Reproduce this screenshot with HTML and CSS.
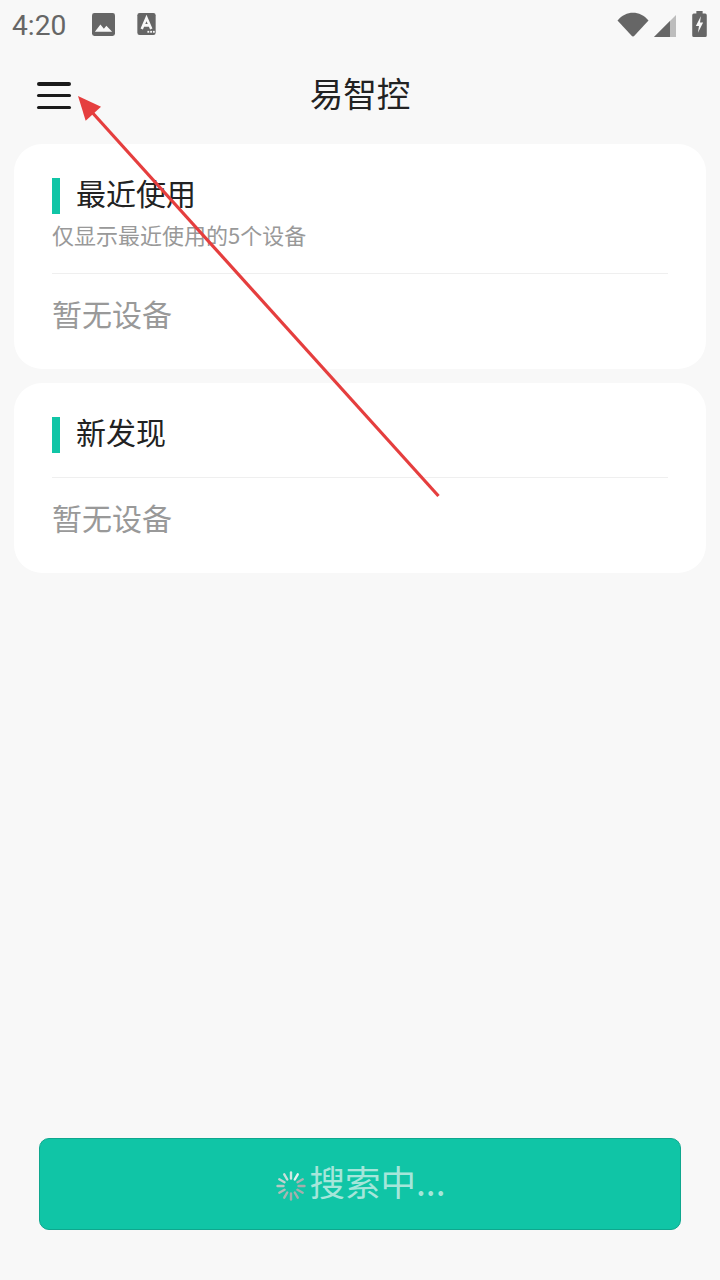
FILE: index.html
```html
<!DOCTYPE html>
<html lang="zh-CN">
<head>
<meta charset="utf-8">
<title>易智控</title>
<link rel="stylesheet" href="styles.css">
</head>
<body>
<div class="screen">
  <div class="status-bar">
    <span class="clock">4:20</span>
    <svg class="st-icon pic" viewBox="0 0 24 24"><rect x="0" y="0" width="24" height="24" rx="2.5" fill="#666"/><path d="M3 19.5 8.8 12l3.6 4.4 2.6-3.2 6 6.3z" fill="#f8f8f8"/></svg>
    <svg class="st-icon font" viewBox="0 0 20 24"><rect width="20" height="24" rx="2.5" fill="#666"/><path d="M4.800 17.500 10 5.500 15.200 17.500M7 13.500h6" fill="none" stroke="#f8f8f8" stroke-width="2.800"/><rect x="11" y="19.500" width="2" height="2" fill="#f8f8f8"/><rect x="14" y="19.500" width="2" height="2" fill="#f8f8f8"/><rect x="17" y="19.500" width="2" height="2" fill="#f8f8f8"/></svg>
    <span class="st-spacer"></span>
    <svg class="wifi" viewBox="0 0 32 25"><path d="M0.500 8.500C9 -1.800 23 -1.800 31.500 8.500L17.600 23.600a2.200 2.200 0 0 1-3.200 0z" fill="#666"/></svg>
    <svg class="signal" viewBox="0 0 22 22"><path d="M0 22 22 0v22z" fill="#bdbdbd"/><path d="M0 22 16 6v16z" fill="#666"/></svg>
    <svg class="battery" viewBox="0 0 14 25"><path d="M4 0h6v2.500h2.500A1.500 1.500 0 0 1 14 4v19.500a1.500 1.500 0 0 1-1.500 1.500h-11A1.500 1.500 0 0 1 0 23.500V4a1.500 1.500 0 0 1 1.500-1.500H4z" fill="#666"/><path d="M8.300 5 3.500 14.500h3L5.500 21l5-10h-3z" fill="#f8f8f8"/></svg>
  </div>

  <header class="app-bar">
    <button class="menu" type="button" aria-label="菜单"><i></i><i></i><i></i></button>
    <h1 class="app-title">易智控</h1>
  </header>

  <main class="lists">
    <section class="card">
      <div class="card-head recent">
        <h2 class="section-title">最近使用</h2>
        <p class="section-note">仅显示最近使用的5个设备</p>
      </div>
      <p class="empty">暂无设备</p>
    </section>
    <section class="card">
      <div class="card-head">
        <h2 class="section-title">新发现</h2>
      </div>
      <p class="empty">暂无设备</p>
    </section>
  </main>

  <div class="action">
    <button class="search-btn" type="button">
      <svg class="spinner" viewBox="0 0 30 30">
        <g stroke-width="2.400" stroke-linecap="round">
          <path d="M15 1.500v6" stroke="#cfe9e3"/>
          <path d="M21.750 3.300l-3 5.200" stroke="#e4f3ef"/>
          <path d="M26.700 8.250l-5.200 3" stroke="#a9b5b2"/>
          <path d="M28.500 15h-6" stroke="#a5aeac"/>
          <path d="M26.700 21.750l-5.200-3" stroke="#a5aeac"/>
          <path d="M21.750 26.700l-3-5.200" stroke="#a5aeac"/>
          <path d="M15 28.500v-6" stroke="#a5aeac"/>
          <path d="M8.250 26.700l3-5.200" stroke="#a9b5b2"/>
          <path d="M3.300 21.750l5.200-3" stroke="#b0bdba"/>
          <path d="M1.500 15h6" stroke="#b8c8c4"/>
          <path d="M3.300 8.250l5.200 3" stroke="#c0d5d0"/>
          <path d="M8.250 3.300l3 5.200" stroke="#c8dfda"/>
        </g>
      </svg>
      <span class="search-label">搜索中...</span>
    </button>
  </div>

  <!-- annotation arrow pointing at the menu button -->
  <svg class="annotation" viewBox="0 0 720 1280">
    <path d="M438.500 496 90 110" stroke="#e53e3e" stroke-width="3.200" fill="none"/>
    <path d="M78 96 101 106.700 85.700 120.700z" fill="#e53e3e"/>
  </svg>
</div>
</body>
</html>
```

FILE: styles.css
```css
* { box-sizing: border-box; }

html, body { margin: 0; padding: 0; }

body {
  background: #f8f8f8;
  font-family: "Noto Sans CJK SC", "Roboto", sans-serif;
}

.screen {
  position: relative;
  width: 720px;
  height: 1280px;
  display: flex;
  flex-direction: column;
  overflow: hidden;
}

/* status bar */
.status-bar {
  height: 48px;
  display: flex;
  align-items: center;
  padding: 0 12px;
  flex: none;
}

.clock {
  font-family: "Roboto", sans-serif;
  font-size: 28.200px;
  color: #666;
  width: 80px;
  line-height: 48px;
  padding-top: 3px;
}

.st-icon { display: block; }
.pic { width: 23px; height: 23px; }
.font { width: 19px; height: 22px; margin-left: 22px; }
.st-spacer { flex: 1; }
.wifi { width: 32px; height: 25px; margin-right: 5px; }
.signal { width: 22px; height: 22px; margin-top: 3px; margin-right: 16px; }
.battery { width: 15px; height: 26px; margin-right: 1px; }

/* app bar */
.app-bar {
  height: 96px;
  flex: none;
  display: flex;
  align-items: center;
  justify-content: center;
  position: relative;
  padding-bottom: 6px;
}

.menu {
  position: absolute;
  left: 37px;
  top: 34px;
  width: 34px;
  height: 27px;
  padding: 0;
  border: 0;
  background: none;
  display: flex;
  flex-direction: column;
  justify-content: space-between;
}

.menu i {
  display: block;
  height: 3.500px;
  border-radius: 2px;
  background: #1a1a1a;
}

.app-title {
  margin: 0;
  font-size: 33.600px;
  font-weight: 400;
  color: #222;
  line-height: 46px;
}

/* device lists */
.lists {
  padding: 0 14px;
  display: flex;
  flex-direction: column;
  gap: 14px;
}

.card {
  background: #fff;
  border-radius: 28px;
  padding: 34px 38px 0;
}

.card-head {
  border-bottom: 1px solid #efefef;
  padding-bottom: 24px;
}

.section-title {
  margin: 0;
  height: 36px;
  display: flex;
  align-items: flex-start;
  gap: 16px;
  font-size: 30px;
  font-weight: 400;
  color: #222;
  line-height: 28px;
}

.section-title::before {
  content: "";
  flex: none;
  width: 8px;
  height: 36px;
  background: #10c5a6;
}

.section-note {
  margin: 5px 0 0;
  font-size: 22px;
  line-height: 30px;
  color: #999;
}

.empty {
  margin: 0;
  font-size: 30px;
  line-height: 40px;
  height: 95px;
  padding-top: 19px;
  color: #999;
}

/* bottom action */
.action {
  margin-top: auto;
  padding: 0 39px 50px;
}

.search-btn {
  width: 100%;
  height: 92px;
  background: #10c5a6;
  border: 1px solid #0fa78e;
  border-radius: 10px;
  display: flex;
  align-items: center;
  justify-content: center;
  gap: 3px;
  padding: 0 0 0 2px;
  font-family: inherit;
}

.spinner { width: 30px; height: 30px; margin-top: 3px; }

.search-label {
  font-size: 35.500px;
  line-height: 46px;
  margin-bottom: 7px;
  color: #a5e6da;
}

/* annotation layer */
.annotation {
  position: absolute;
  left: 0;
  top: 0;
  width: 720px;
  height: 1280px;
  pointer-events: none;
}
```
